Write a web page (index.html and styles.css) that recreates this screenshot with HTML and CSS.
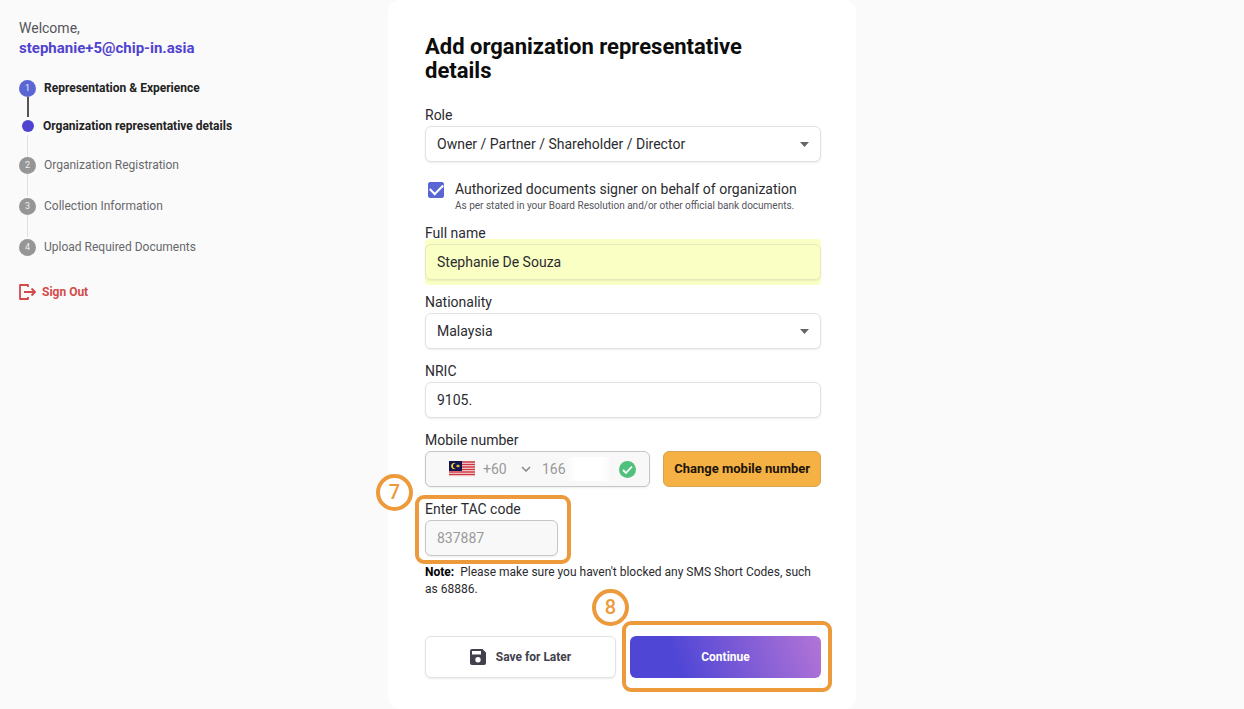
FILE: index.html
```html
<!DOCTYPE html>
<html lang="en">
<head>
    <meta charset="UTF-8">
    <meta name="viewport" content="width=device-width, initial-scale=1.0">
    <title>Add organization representative details</title>
    <link rel="stylesheet" href="styles.css">
</head>
<body>
    <div class="layout">
        <aside class="sidebar">
            <p class="welcome">Welcome,</p>
            <p class="user-email">stephanie+5@chip-in.asia</p>

            <ol class="steps">
                <li class="step step-active"><span class="step-number">1</span>Representation &amp; Experience</li>
                <li class="step step-sub"><span class="step-dot"></span>Organization representative details</li>
                <li class="step"><span class="step-number">2</span>Organization Registration</li>
                <li class="step"><span class="step-number">3</span>Collection Information</li>
                <li class="step"><span class="step-number">4</span>Upload Required Documents</li>
            </ol>

            <a class="sign-out" href="#">
                <svg width="17" height="16" viewBox="0 0 17 16" fill="none" stroke="currentColor" stroke-width="1.800" stroke-linejoin="round">
                    <path d="M9 3V1H1v14h8v-2"/>
                    <path d="M5 8h10.500M12.500 4.500L16 8l-3.500 3.500"/>
                </svg>
                Sign Out
            </a>
        </aside>

        <main class="card">
            <h1>Add organization representative details</h1>

            <form>
                <div class="field">
                    <label for="role">Role</label>
                    <div class="select-box">
                        <select id="role">
                            <option>Owner / Partner / Shareholder / Director</option>
                        </select>
                        <svg class="caret" width="9" height="5" viewBox="0 0 9 5"><path d="M0 0h9L4.500 5z" fill="#666"/></svg>
                    </div>
                </div>

                <div class="signer">
                    <input type="checkbox" id="signer" checked>
                    <label for="signer">
                        Authorized documents signer on behalf of organization
                        <small>As per stated in your Board Resolution and/or other official bank documents.</small>
                    </label>
                </div>

                <div class="field">
                    <label for="full-name">Full name</label>
                    <div class="highlight">
                        <input type="text" id="full-name" value="Stephanie De Souza">
                    </div>
                </div>

                <div class="field">
                    <label for="nationality">Nationality</label>
                    <div class="select-box">
                        <select id="nationality">
                            <option>Malaysia</option>
                        </select>
                        <svg class="caret" width="9" height="5" viewBox="0 0 9 5"><path d="M0 0h9L4.500 5z" fill="#666"/></svg>
                    </div>
                </div>

                <div class="field">
                    <label for="nric">NRIC</label>
                    <input type="text" id="nric" value="9105.">
                </div>

                <div class="field">
                    <label for="mobile">Mobile number</label>
                    <div class="mobile-row">
                        <div class="phone-box">
                            <svg class="flag" width="26" height="16" viewBox="0 0 26 16">
                                <rect width="26" height="16" fill="#f6eeee"/>
                                <path d="M0 1h26M0 3.500h26M0 6h26M0 8.500h26M0 11h26M0 13.500h26" stroke="#cf3540" stroke-width="1.300"/>
                                <rect width="13" height="10" fill="#141450"/>
                                <path d="M6.800 2.200a3.200 3.200 0 1 0 0 5.600a2.600 2.600 0 1 1 0-5.600z" fill="#fbd22e"/>
                                <path d="M9 3l.5 1.300 1.400-.4-.8 1.100.8 1.100-1.400-.4L9 7l-.5-1.300-1.400.4.8-1.100-.8-1.100 1.400.4z" fill="#fbd22e"/>
                            </svg>
                            <select class="dial-code" aria-label="Country code" disabled>
                                <option>+60</option>
                            </select>
                            <svg class="chevron" width="10" height="6" viewBox="0 0 10 6" fill="none" stroke="#888" stroke-width="1.500"><path d="M1 1l4 4 4-4"/></svg>
                            <input type="tel" id="mobile" value="166" disabled>
                            <svg width="17" height="17" viewBox="0 0 17 17" fill="none">
                                <circle cx="8.500" cy="8.500" r="8.500" fill="#50c07c"/>
                                <path d="M4 9l3 3 6-6.500" stroke="#fff" stroke-width="1.800"/>
                            </svg>
                        </div>
                        <button type="button" class="btn btn-change">Change mobile number</button>
                    </div>
                </div>

                <div class="field tac">
                    <label for="tac">Enter TAC code</label>
                    <input type="text" id="tac" value="837887" disabled>
                    <span class="marker marker-tac"></span>
                    <span class="badge badge-tac">7</span>
                </div>

                <p class="note"><strong>Note:</strong> Please make sure you haven't blocked any SMS Short Codes, such as 68886.</p>

                <div class="actions">
                    <button type="button" class="btn btn-save">
                        <svg width="16" height="16" viewBox="0 0 16 16">
                            <path fill="#41414d" fill-rule="evenodd" d="M2 0h10.500L16 3.500V14a2 2 0 0 1-2 2H2a2 2 0 0 1-2-2V2a2 2 0 0 1 2-2zM2 2v3.500h9V2zM8 8a2.700 2.700 0 1 0 0 5.400A2.700 2.700 0 0 0 8 8z"/>
                        </svg>
                        Save for Later
                    </button>
                    <div class="continue">
                        <button type="submit" class="btn btn-continue">Continue</button>
                        <span class="marker marker-continue"></span>
                        <span class="badge badge-continue">8</span>
                    </div>
                </div>
            </form>
        </main>
    </div>
</body>
</html>
```
FILE: styles.css
```css
* {
    box-sizing: border-box;
}

body {
    margin: 0;
    background-color: #fafafa;
    font-family: Roboto, sans-serif;
    font-size: 14px;
    line-height: 20px;
    color: #2b2b2f;
}

h1, p, ol {
    margin: 0;
    padding: 0;
}

input, select, button {
    font: inherit;
    color: inherit;
}

.layout {
    display: grid;
    grid-template-columns: 1fr minmax(auto, 468px) 1fr;
    min-height: 100vh;
}

/* Sidebar */
.sidebar {
    padding: 18px 19px;
}

.welcome {
    color: #55555c;
}

.user-email {
    font-size: 15px;
    font-weight: 700;
    color: #5043d0;
}

.steps {
    margin-top: 21px;
    list-style: none;
    font-size: 12px;
    line-height: 18px;
    color: #68686c;
}

.step {
    position: relative;
    display: flex;
    align-items: center;
    gap: 8px;
    margin-bottom: 23px;
}

.step:last-child {
    margin-bottom: 0;
}

/* line down to the next step */
.step:not(:last-child)::after {
    content: "";
    position: absolute;
    left: 8px;
    top: 100%;
    width: 1px;
    height: 22px;
    background-color: #e0e0e0;
}

.step-active,
.step-sub {
    font-weight: 700;
    color: #222;
}

.step-active {
    margin-bottom: 20px;
}

.step-active:not(:last-child)::after {
    width: 2px;
    height: 20px;
    background-color: #555;
}

.step-sub {
    margin-bottom: 21px;
}

.step-number {
    width: 17px;
    height: 17px;
    border-radius: 50%;
    background-color: #969696;
    color: #eee;
    font-size: 9px;
    font-weight: 400;
    line-height: 17px;
    text-align: center;
}

.step-active .step-number {
    background-color: #5a66d4;
}

.step-dot {
    width: 12px;
    height: 12px;
    margin: 0 1px 0 3px;
    border-radius: 50%;
    background-color: #5043d0;
}

.sign-out {
    display: inline-flex;
    align-items: center;
    gap: 6px;
    margin-top: 26px;
    font-size: 12px;
    font-weight: 700;
    color: #d34a4a;
    text-decoration: none;
}

/* Form card */
.card {
    padding: 35px 35px 30px 37px;
    border-radius: 12px;
    background-color: #fff;
}

h1 {
    max-width: 360px;
    margin-bottom: 21px;
    font-size: 22px;
    font-weight: 700;
    line-height: 24px;
    color: #0c0c0c;
}

.field {
    margin-bottom: 11px;
}

.field label {
    display: block;
    line-height: 22px;
}

.field > input,
.highlight input,
.select-box select,
.phone-box {
    display: block;
    width: 100%;
    height: 36px;
    padding: 0 11px;
    border: 1px solid #e2e2e2;
    border-radius: 6px;
    background-color: #fff;
    box-shadow: 0 1px 2px rgba(0, 0, 0, 0.08);
}

.select-box {
    display: grid;
    align-items: center;
}

.select-box > * {
    grid-area: 1 / 1;
}

.select-box select,
.dial-code {
    appearance: none;
}

.caret {
    justify-self: end;
    margin-right: 12px;
    pointer-events: none;
}

.signer {
    display: flex;
    align-items: flex-start;
    gap: 11px;
    margin: 17px 0 9px 3px;
}

.signer input {
    display: grid;
    place-items: center;
    appearance: none;
    width: 16px;
    height: 16px;
    margin: 3px 0 0;
    border: 1px solid #5a66d4;
    border-radius: 2px;
}

.signer input:checked {
    background-color: #5a66d4;
}

.signer input:checked::before {
    content: "";
    width: 11px;
    height: 6px;
    border: solid #fff;
    border-width: 0 0 2px 2px;
    transform: translateY(-2px) rotate(-45deg);
}

.signer small {
    display: block;
    font-size: 10px;
    line-height: 14px;
    color: #55555c;
}

.highlight {
    border-radius: 4px;
    background-color: #faffc4;
    box-shadow: 0 -5px #faffc4, 0 5px #faffc4;
}

.highlight input {
    border-color: #e4e8bc;
    background-color: transparent;
}

.mobile-row {
    display: flex;
    gap: 13px;
}

.phone-box {
    display: flex;
    align-items: center;
    flex: 1;
    min-width: 0;
    padding: 0 13px 0 23px;
}

.phone-box,
.field > input:disabled {
    border-color: #c6c6c6;
    background-color: #f8f8f8;
    color: #999;
}

.dial-code {
    width: 34px;
    margin: 0 4px 0 8px;
    padding: 0;
    border: 0;
    background: none;
    color: #999;
    opacity: 1;
}

.phone-box input {
    flex: 1;
    min-width: 0;
    height: 24px;
    margin: 0 8px 0 11px;
    padding: 0;
    border: 0;
    background: linear-gradient(90deg, transparent 24px, #fff 34px, #fff 60px, transparent);
}

.btn {
    padding: 0 10px;
    border: 1px solid transparent;
    border-radius: 6px;
    font-size: 12px;
    font-weight: 700;
    cursor: pointer;
}

.btn-change {
    border-color: #d6a452;
    background-color: #f5b143;
    font-size: 13px;
    white-space: nowrap;
    color: #1c1408;
}

.tac {
    position: relative;
    width: 133px;
    margin-bottom: 8px;
}

.note {
    font-size: 12px;
    line-height: 17px;
}

.note strong {
    margin-right: 3px;
    color: #000;
}

.actions {
    display: grid;
    grid-template-columns: 1fr 1fr;
    gap: 14px;
    margin-top: 38px;
}

.actions .btn {
    width: 100%;
    height: 42px;
}

.btn-save {
    display: flex;
    align-items: center;
    justify-content: center;
    gap: 10px;
    border-color: #e2e2e2;
    background-color: #fff;
    box-shadow: 0 1px 2px rgba(0, 0, 0, 0.08);
    color: #41414d;
}

.continue {
    position: relative;
}

.btn-continue {
    border: 0;
    background: linear-gradient(70deg, #4f46d6 25%, #b374d6);
    color: #fff;
}

/* Guide marks lying over the form */
.marker {
    position: absolute;
    border: 4px solid #ec9a3c;
    border-radius: 9px;
    pointer-events: none;
}

.marker-tac {
    inset: -3px -13px -8px -10px;
}

.marker-continue {
    inset: -15px -11px -14px -8px;
}

.badge {
    position: absolute;
    width: 37px;
    height: 37px;
    border: 4px solid #ec9a3c;
    border-radius: 50%;
    background-color: #fff;
    font-size: 20px;
    font-weight: 500;
    line-height: 29px;
    text-align: center;
    color: #ec9a3c;
}

.badge-tac {
    top: -24px;
    left: -49px;
}

.badge-continue {
    top: -47px;
    left: -38px;
}
```
